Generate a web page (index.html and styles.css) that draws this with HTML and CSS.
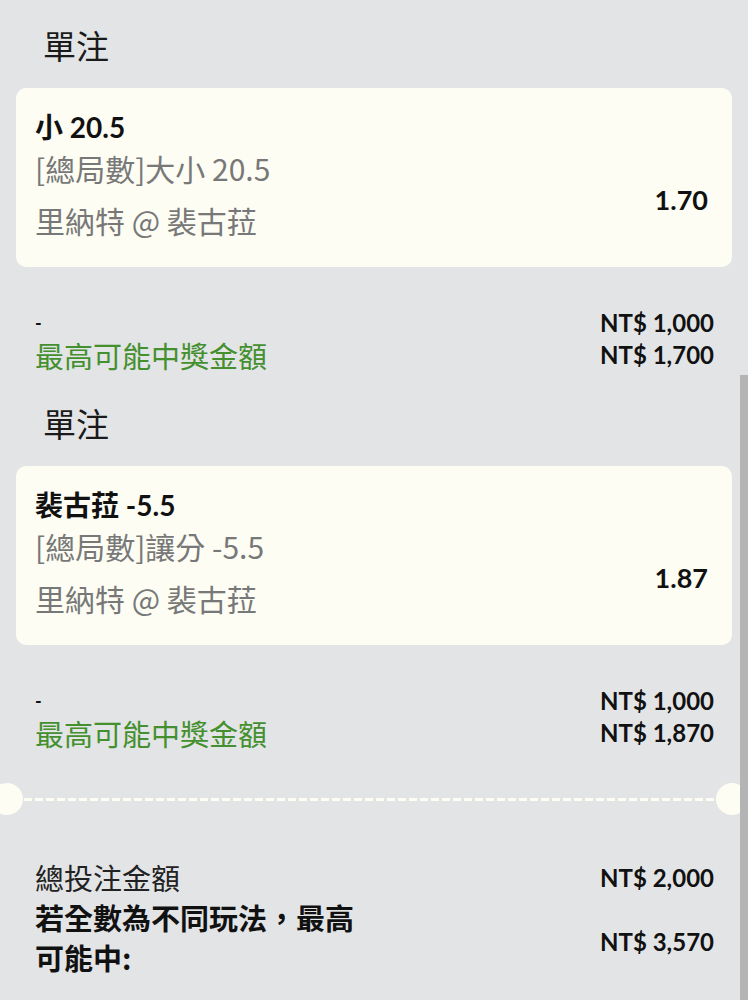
FILE: index.html
```html
<!DOCTYPE html>
<html>
<head>
  <meta charset="UTF-8">
  <title>投注單</title>
  <meta name="viewport" content="width=device-width, initial-scale=1">
  <link rel="stylesheet" href="styles.css">
</head>
<body>
  <div class="slip">
    <section class="bet">
      <h3 class="bet-title">單注</h3>
      <div class="card">
        <div class="card-info">
          <div class="pick">小 20.5</div>
          <div class="market">[總局數]大小 20.5</div>
          <div class="match">里納特 @ 裴古菈</div>
        </div>
        <div class="odds">1.70</div>
      </div>
      <div class="line">
        <span class="dash">-</span>
        <span class="money">NT$ 1,000</span>
      </div>
      <div class="line">
        <span class="win">最高可能中獎金額</span>
        <span class="money">NT$ 1,700</span>
      </div>
    </section>

    <section class="bet">
      <h3 class="bet-title">單注</h3>
      <div class="card">
        <div class="card-info">
          <div class="pick">裴古菈 -5.5</div>
          <div class="market">[總局數]讓分 -5.5</div>
          <div class="match">里納特 @ 裴古菈</div>
        </div>
        <div class="odds">1.87</div>
      </div>
      <div class="line">
        <span class="dash">-</span>
        <span class="money">NT$ 1,000</span>
      </div>
      <div class="line">
        <span class="win">最高可能中獎金額</span>
        <span class="money">NT$ 1,870</span>
      </div>
    </section>

    <div class="divider">
      <span class="notch left"></span>
      <span class="dots"></span>
      <span class="notch right"></span>
    </div>

    <div class="totals">
      <div class="total-row">
        <span class="total-label">總投注金額</span>
        <span class="money">NT$ 2,000</span>
      </div>
      <div class="total-row">
        <span class="total-label strong">若全數為不同玩法，最高<br>可能中:</span>
        <span class="money lower">NT$ 3,570</span>
      </div>
    </div>
  </div>
  <div class="scrollbar"></div>
</body>
</html>
```

FILE: styles.css
```css
body { margin: 0; background: #e3e4e6; font-family: Lato, "Noto Sans CJK TC", sans-serif; color: #111; overflow: hidden; }
.slip { padding-top: 24px; }
.bet { padding: 0 16px; }
.bet-title { margin: 0 0 20px 27px; font-size: 33px; font-weight: normal; line-height: 44px; color: #1a1a1a; }
.card { background: #fdfdf4; border-radius: 10px; height: 179px; box-sizing: border-box; padding: 20px 24px 0 19px; display: flex; justify-content: space-between; align-items: center; }
.card-info { align-self: flex-start; }
.pick { font-size: 28px; font-weight: bold; line-height: 38px; }
.market, .match { font-family: "Noto Sans CJK TC", sans-serif; font-size: 30px; color: #787878; line-height: 42px; }
.market { margin-top: 1px; }
.match { margin-top: 10px; }
.odds { font-size: 27px; font-weight: bold; margin-top: 24px; }
.line { display: flex; justify-content: space-between; align-items: center; padding: 0 18px 0 19px; line-height: 32px; }
.card + .line { margin-top: 40px; }
.line + .line { margin-bottom: 31px; }
.dash { font-size: 18px; font-weight: bold; line-height: 20px; }
.win { font-family: "Noto Sans CJK TC", sans-serif; font-size: 29px; color: #44902f; }
.money { font-size: 24px; font-weight: bold; }
.money.lower { margin-top: 8px; }
.divider { display: flex; align-items: center; height: 32px; margin-top: 34px; }
.notch { width: 32px; height: 32px; border-radius: 50%; background: #fdfdf4; flex: none; }
.notch.left { margin-left: -9px; }
.dots { flex: 1; height: 3px; margin: 0 1px; background: repeating-linear-gradient(to right, #fdfdf4 0 8px, transparent 8px 11px); }
.totals { padding: 42px 34px 0 35px; }
.total-row { display: flex; justify-content: space-between; align-items: center; }
.total-label { font-family: "Noto Sans CJK TC", sans-serif; font-size: 29px; line-height: 40px; color: #222; }
.total-label.strong { font-weight: bold; color: #111; }
.scrollbar { position: fixed; right: 0; top: 375px; bottom: 0; width: 8px; background: #b4b4b4; }
```
